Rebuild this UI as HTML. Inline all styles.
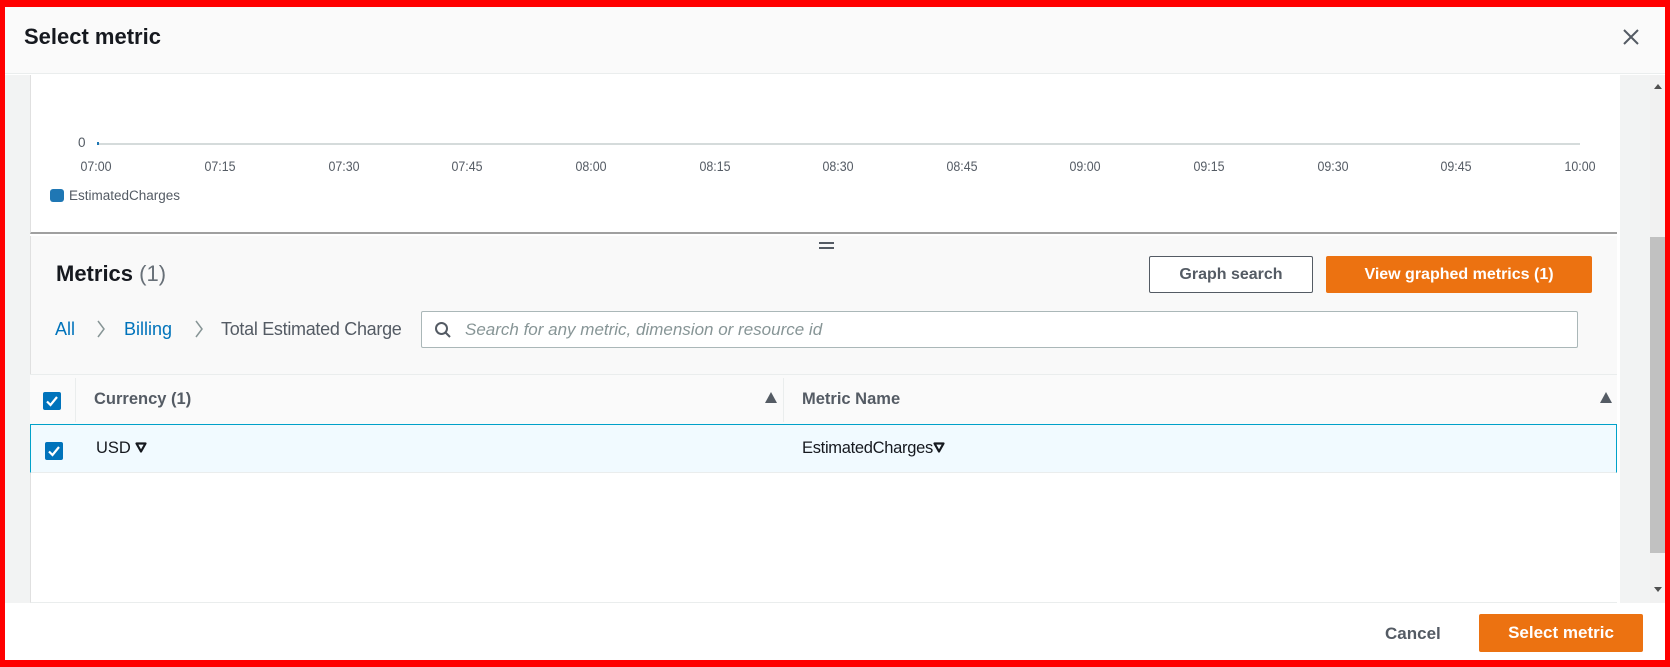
<!DOCTYPE html>
<html><head><meta charset="utf-8"><style>
*{margin:0;padding:0;box-sizing:border-box}
body{width:1670px;height:667px;overflow:hidden;background:#fff;font-family:"Liberation Sans",Arial,sans-serif;position:relative}
.a{position:absolute}
.frame{left:0;top:0;width:1670px;height:667px;border:solid #f00;border-width:7px 5px 7px 5px;pointer-events:none;z-index:10}
.t{white-space:nowrap;line-height:1}
.tick{font-size:13.5px;color:#545b64;transform:translateX(-50%) scaleX(0.92)}
.cb{width:18px;height:18px;background:#0073bb;border-radius:2px}
.cb svg{display:block}
</style></head><body>
<div class="a" style="left:0;top:0;width:1670px;height:74px;background:#fafafa;border-bottom:1px solid #eaeded"></div>
<div class="a t" style="left:24px;top:26px;font-size:22px;font-weight:bold;color:#16191f">Select metric</div>
<svg class="a" style="left:1622px;top:28px" width="18" height="18" viewBox="0 0 18 18"><path d="M2 2L16 16M16 2L2 16" stroke="#545b64" stroke-width="2"/></svg>
<div class="a" style="left:5px;top:75px;width:25px;height:528px;background:#f2f3f3"></div>
<div class="a" style="left:1620px;top:75px;width:45px;height:528px;background:#f2f3f3"></div>
<div class="a" style="left:1650px;top:75px;width:15px;height:528px;background:#f1f1f1"></div>
<div class="a" style="left:1650px;top:237px;width:15px;height:316px;background:#c1c1c1"></div>
<div class="a" style="left:1654px;top:84px;width:0;height:0;border-left:4px solid transparent;border-right:4px solid transparent;border-bottom:5px solid #505050"></div>
<div class="a" style="left:1654px;top:587px;width:0;height:0;border-left:4px solid transparent;border-right:4px solid transparent;border-top:5px solid #505050"></div>
<div class="a" style="left:30px;top:75px;width:1587px;height:159px;background:#fff;border-left:1px solid #e0e0e0;border-bottom:2px solid #a0a0a0"></div>
<div class="a t" style="left:78px;top:136px;font-size:13.5px;color:#545b64">0</div>
<div class="a" style="left:97px;top:143px;width:1483px;height:2px;background:#d5dbdb"></div>
<div class="a" style="left:97px;top:142px;width:2px;height:3px;background:#1f77b4"></div>
<div class="a t tick" style="left:96px;top:160px">07:00</div>
<div class="a t tick" style="left:220px;top:160px">07:15</div>
<div class="a t tick" style="left:344px;top:160px">07:30</div>
<div class="a t tick" style="left:467px;top:160px">07:45</div>
<div class="a t tick" style="left:591px;top:160px">08:00</div>
<div class="a t tick" style="left:715px;top:160px">08:15</div>
<div class="a t tick" style="left:838px;top:160px">08:30</div>
<div class="a t tick" style="left:962px;top:160px">08:45</div>
<div class="a t tick" style="left:1085px;top:160px">09:00</div>
<div class="a t tick" style="left:1209px;top:160px">09:15</div>
<div class="a t tick" style="left:1333px;top:160px">09:30</div>
<div class="a t tick" style="left:1456px;top:160px">09:45</div>
<div class="a t tick" style="left:1580px;top:160px">10:00</div>
<div class="a" style="left:50px;top:189px;width:14px;height:13px;background:#1f77b4;border-radius:3px"></div>
<div class="a t" style="left:69px;top:189px;font-size:13.5px;color:#545b64">EstimatedCharges</div>
<div class="a" style="left:30px;top:236px;width:1587px;height:138px;background:#f9f9f9;border-left:1px solid #e0e0e0"></div>
<div class="a" style="left:819px;top:242px;width:15px;height:2px;background:#545b64"></div>
<div class="a" style="left:819px;top:247px;width:15px;height:2px;background:#545b64"></div>
<div class="a t" style="left:56px;top:263px;font-size:22px;color:#16191f"><b>Metrics</b> <span style="color:#687078">(1)</span></div>
<div class="a t" style="left:1149px;top:256px;width:164px;height:37px;border:1px solid #545b64;border-radius:2px;background:#fff;font-size:16px;font-weight:bold;color:#545b64;text-align:center;line-height:35px">Graph search</div>
<div class="a t" style="left:1326px;top:256px;width:266px;height:37px;border-radius:2px;background:#ec7211;font-size:16px;font-weight:bold;color:#fff;text-align:center;line-height:37px">View graphed metrics (1)</div>
<div class="a t" style="left:55px;top:320px;font-size:18px;color:#0073bb">All</div>
<svg class="a" style="left:96px;top:320px" width="10" height="18"><path d="M2 1L8 9L2 17" fill="none" stroke="#879596" stroke-width="1.5"/></svg>
<div class="a t" style="left:124px;top:320px;font-size:18px;color:#0073bb">Billing</div>
<svg class="a" style="left:194px;top:320px" width="10" height="18"><path d="M2 1L8 9L2 17" fill="none" stroke="#879596" stroke-width="1.5"/></svg>
<div class="a t" style="left:221px;top:320px;font-size:18px;color:#545b64;letter-spacing:-0.3px">Total Estimated Charge</div>
<div class="a" style="left:421px;top:311px;width:1157px;height:37px;background:#fff;border:1px solid #aab7b8;border-radius:2px"></div>
<svg class="a" style="left:434px;top:321px" width="18" height="18" viewBox="0 0 18 18"><circle cx="7.5" cy="7.5" r="5.5" fill="none" stroke="#545b64" stroke-width="2"/><path d="M11.5 11.5L16 16" stroke="#545b64" stroke-width="2"/></svg>
<div class="a t" style="left:465px;top:321px;font-size:17px;color:#879596;font-style:italic">Search for any metric, dimension or resource id</div>
<div class="a" style="left:30px;top:374px;width:1587px;height:229px;background:#fff;border-left:1px solid #e0e0e0;border-bottom:1px solid #eaeded"></div>
<div class="a" style="left:30px;top:374px;width:1587px;height:50px;background:#fafafa;border-top:1px solid #eaeded"></div>
<div class="a" style="left:75px;top:378px;width:1px;height:44px;background:#eaeded"></div>
<div class="a" style="left:783px;top:378px;width:1px;height:44px;background:#eaeded"></div>
<div class="a cb" style="left:43px;top:392px"><svg width="18" height="18"><path d="M4 9.5L7.5 13L14 5" fill="none" stroke="#fff" stroke-width="2.2"/></svg></div>
<div class="a t" style="left:94px;top:391px;font-size:16.5px;font-weight:bold;color:#545b64">Currency (1)</div>
<div class="a" style="left:765px;top:392px;border-left:6px solid transparent;border-right:6px solid transparent;border-bottom:11px solid #545b64"></div>
<div class="a t" style="left:802px;top:391px;font-size:16.5px;font-weight:bold;color:#545b64">Metric Name</div>
<div class="a" style="left:1600px;top:392px;border-left:6px solid transparent;border-right:6px solid transparent;border-bottom:11px solid #545b64"></div>
<div class="a" style="left:30px;top:424px;width:1587px;height:49px;background:#f1faff;border:1px solid #00a1c9;border-bottom:1px solid #eaeded"></div>
<div class="a cb" style="left:45px;top:442px"><svg width="18" height="18"><path d="M4 9.5L7.5 13L14 5" fill="none" stroke="#fff" stroke-width="2.2"/></svg></div>
<div class="a t" style="left:96px;top:440px;font-size:16.5px;color:#16191f">USD <svg width="12" height="11" viewBox="0 0 12 11"><path d="M1.5 1.5H10.5L6 9.5Z" fill="none" stroke="#16191f" stroke-width="2.2" stroke-linejoin="round"/></svg></div>
<div class="a t" style="left:802px;top:440px;font-size:16.5px;color:#16191f;letter-spacing:-0.3px">EstimatedCharges<svg width="12" height="11" viewBox="0 0 12 11"><path d="M1.5 1.5H10.5L6 9.5Z" fill="none" stroke="#16191f" stroke-width="2.2" stroke-linejoin="round"/></svg></div>
<div class="a t" style="left:1385px;top:625px;font-size:17px;font-weight:bold;color:#545b64">Cancel</div>
<div class="a t" style="left:1479px;top:614px;width:164px;height:38px;border-radius:2px;background:#ec7211;font-size:17px;font-weight:bold;color:#fff;text-align:center;line-height:38px">Select metric</div>
<div class="a frame"></div>
</body></html>
